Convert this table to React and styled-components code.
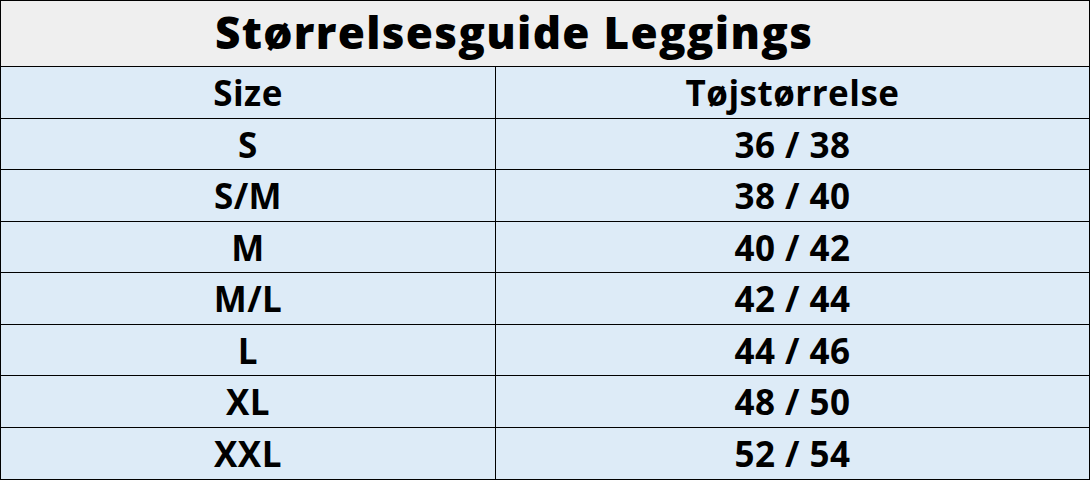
import styled, { createGlobalStyle } from 'styled-components';

const sizes = [
  { size: 'S', eu: '36 / 38' },
  { size: 'S/M', eu: '38 / 40' },
  { size: 'M', eu: '40 / 42' },
  { size: 'M/L', eu: '42 / 44' },
  { size: 'L', eu: '44 / 46' },
  { size: 'XL', eu: '48 / 50' },
  { size: 'XXL', eu: '52 / 54' },
];

function App() {
  return (
    <>
      <GlobalStyle />
      <Sheet>
        <Title>Størrelsesguide Leggings</Title>
        <Grid>
          <Cell>Size</Cell>
          <Cell $last>Tøjstørrelse</Cell>
          {sizes.map((row, i) => (
            <Row key={row.size}>
              <Cell $bottom={i === sizes.length - 1}>{row.size}</Cell>
              <Cell $last $bottom={i === sizes.length - 1}>
                {row.eu}
              </Cell>
            </Row>
          ))}
        </Grid>
      </Sheet>
    </>
  );
}

export default App;

const GlobalStyle = createGlobalStyle`
  html, body {
    margin: 0;
    padding: 0;
    background: #ffffff;
  }
  body {
    font-family: "Open Sans", "Noto Sans", sans-serif;
  }
`;

const Sheet = styled.div`
  width: 1090px;
  height: 480px;
  box-sizing: border-box;
  border: 1px solid #000;
  display: flex;
  flex-direction: column;
  color: #000;
`;

const Title = styled.div`
  height: 66px;
  box-sizing: border-box;
  background: #efefef;
  border-bottom: 1px solid #000;
  padding-left: 214px;
  padding-bottom: 4px;
  display: flex;
  align-items: center;
  font-size: 44px;
  font-weight: 800;
  letter-spacing: 1.3px;
`;

const Grid = styled.div`
  flex: 1;
  display: grid;
  grid-template-columns: 495px 1fr;
  grid-auto-rows: 1fr;
  background: #ddebf7;
`;

const Row = styled.div`
  display: contents;
`;

const Cell = styled.div`
  display: flex;
  align-items: center;
  justify-content: center;
  border-right: ${(p) => (p.$last ? 'none' : '1px solid #000')};
  border-bottom: ${(p) => (p.$bottom ? 'none' : '1px solid #000')};
  font-size: 35px;
  font-weight: 700;
  letter-spacing: 0.5px;
  padding-top: 1px;
`;
